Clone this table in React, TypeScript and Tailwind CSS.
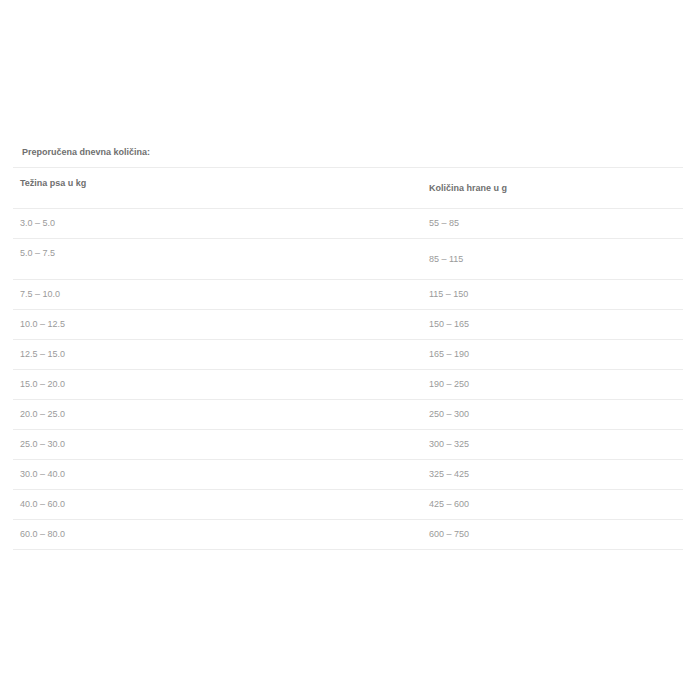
const rows: { w: string; g: string; tall?: boolean }[] = [
  { w: "3.0 – 5.0", g: "55 – 85" },
  { w: "5.0 – 7.5", g: "85 – 115", tall: true },
  { w: "7.5 – 10.0", g: "115 – 150" },
  { w: "10.0 – 12.5", g: "150 – 165" },
  { w: "12.5 – 15.0", g: "165 – 190" },
  { w: "15.0 – 20.0", g: "190 – 250" },
  { w: "20.0 – 25.0", g: "250 – 300" },
  { w: "25.0 – 30.0", g: "300 – 325" },
  { w: "30.0 – 40.0", g: "325 – 425" },
  { w: "40.0 – 60.0", g: "425 – 600" },
  { w: "60.0 – 80.0", g: "600 – 750" },
];

export default function App() {
  return (
    <div className="min-h-[700px] bg-white pt-[145px] font-['Liberation_Sans',Arial,sans-serif] text-[9px]">
      <p className="mb-[8px] pl-[22px] font-bold leading-[14px] text-[#6f6f6f]">
        Preporučena dnevna količina:
      </p>
      <div className="ml-[13px] mr-[17px] border-t border-[#ececec]">
        <div className="grid h-[41px] grid-cols-[409px_1fr] border-b border-[#ececec] font-bold text-[#6f6f6f]">
          <div className="px-[7px] pt-[8px] leading-[14px]">Težina psa u kg</div>
          <div className="flex items-center px-[7px] pb-px leading-[14px]">Količina hrane u g</div>
        </div>
        {rows.map((row) => (
          <div
            className={`grid grid-cols-[409px_1fr] border-b border-[#ececec] text-[#9a9a9a] ${
              row.tall ? "h-[41px]" : "h-[30px]"
            }`}
            key={row.w}
          >
            {row.tall ? (
              <div className="px-[7px] pt-[7px] leading-[14px]">{row.w}</div>
            ) : (
              <div className="flex items-center px-[7px] pb-px leading-[14px]">{row.w}</div>
            )}
            <div className="flex items-center px-[7px] pb-px leading-[14px]">{row.g}</div>
          </div>
        ))}
      </div>
    </div>
  );
}
